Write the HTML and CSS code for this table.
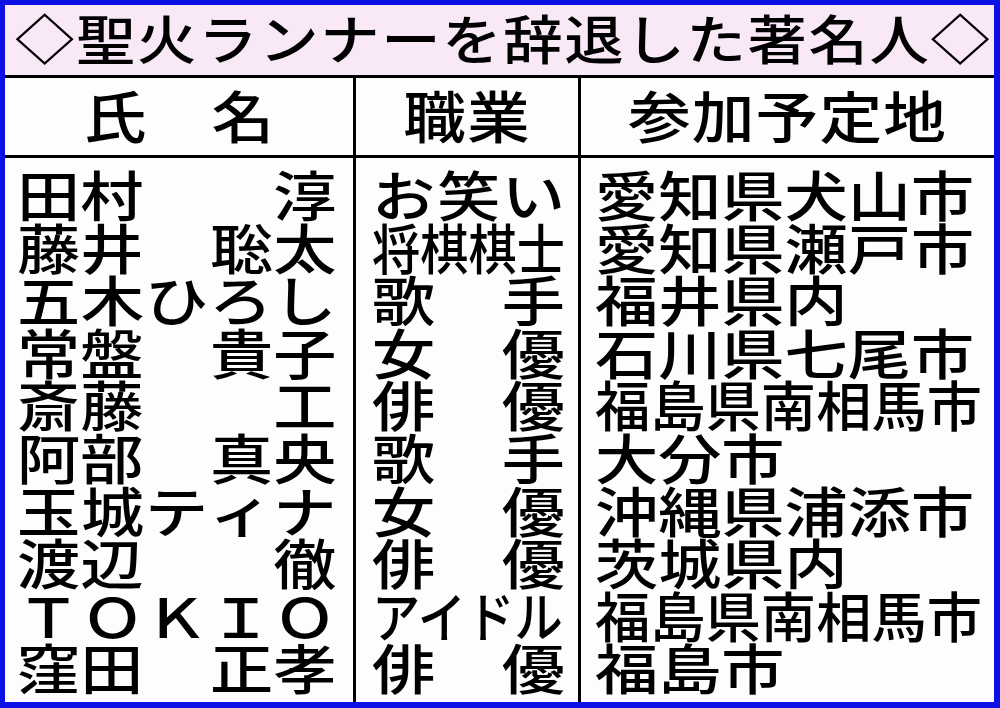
FILE: index.html
```html
<!DOCTYPE html>
<html lang="ja">
<head>
<meta charset="utf-8">
<title>聖火ランナーを辞退した著名人</title>
<link rel="stylesheet" href="styles.css">
</head>
<body>
<div class="board">
  <h1 class="title"><span class="title-text">◇聖火ランナーを辞退した著名人◇</span></h1>
  <div class="table">
    <div class="th c1"><span class="th-text">氏　名</span></div>
    <div class="th c2"><span class="th-text">職業</span></div>
    <div class="th c3"><span class="th-text">参加予定地</span></div>

    <div class="td c1">
      <div class="lines names">
        <div class="ln"><span>田村</span><span>淳</span></div>
        <div class="ln"><span>藤井</span><span>聡太</span></div>
        <div class="ln"><span>五</span><span>木</span><span>ひ</span><span>ろ</span><span>し</span></div>
        <div class="ln"><span>常盤</span><span>貴子</span></div>
        <div class="ln"><span>斎藤</span><span>工</span></div>
        <div class="ln"><span>阿部</span><span>真央</span></div>
        <div class="ln"><span>玉</span><span>城</span><span>テ</span><span>ィ</span><span>ナ</span></div>
        <div class="ln"><span>渡辺</span><span>徹</span></div>
        <div class="ln"><span>Ｔ</span><span>Ｏ</span><span>Ｋ</span><span>Ｉ</span><span>Ｏ</span></div>
        <div class="ln"><span>窪田</span><span>正孝</span></div>
      </div>
    </div>

    <div class="td c2">
      <div class="lines jobs">
        <div class="ln"><span>お</span><span>笑</span><span>い</span></div>
        <div class="ln-sq"><span class="sq">将棋棋士</span></div>
        <div class="ln"><span>歌</span><span>手</span></div>
        <div class="ln"><span>女</span><span>優</span></div>
        <div class="ln"><span>俳</span><span>優</span></div>
        <div class="ln"><span>歌</span><span>手</span></div>
        <div class="ln"><span>女</span><span>優</span></div>
        <div class="ln"><span>俳</span><span>優</span></div>
        <div class="ln-sq"><span class="sq">アイドル</span></div>
        <div class="ln"><span>俳</span><span>優</span></div>
      </div>
    </div>

    <div class="td c3">
      <div class="lines places">
        <div class="pl">愛知県犬山市</div>
        <div class="pl">愛知県瀬戸市</div>
        <div class="pl">福井県内</div>
        <div class="pl">石川県七尾市</div>
        <div class="pl"><span class="sq">福島県南相馬市</span></div>
        <div class="pl">大分市</div>
        <div class="pl">沖縄県浦添市</div>
        <div class="pl">茨城県内</div>
        <div class="pl"><span class="sq">福島県南相馬市</span></div>
        <div class="pl">福島市</div>
      </div>
    </div>
  </div>
</div>
</body>
</html>
```

FILE: styles.css
```css
html, body {
  margin: 0;
  padding: 0;
  background: #0b10e6;
}

.board {
  width: 1000px;
  height: 708px;
  box-sizing: border-box;
  border-style: solid;
  border-color: #0b10e6;
  border-width: 5px 6px 6px 5px;
  background: #fdfdfd;
  display: flex;
  flex-direction: column;
  font-family: "Noto Sans CJK JP", "Noto Sans CJK SC", sans-serif;
  font-weight: 500;
  color: #000;
  overflow: hidden;
}

.title {
  margin: 0;
  height: 73px;
  box-sizing: border-box;
  background: #f9e9f7;
  border-bottom: 3px solid #000;
  font-weight: 500;
  font-size: 53px;
  line-height: 64px;
  white-space: nowrap;
  padding-left: 10px;
}

.title-text {
  display: inline-block;
  letter-spacing: 1.5px;
  transform: scaleX(1.12);
  transform-origin: left top;
}

.table {
  flex: 1;
  display: grid;
  grid-template-columns: 351px 225px 1fr;
  grid-template-rows: 80px 1fr;
}

.th,
.td {
  box-sizing: border-box;
  min-width: 0;
}

.th {
  border-bottom: 3px solid #000;
  text-align: center;
  font-size: 56px;
  line-height: 71px;
  white-space: nowrap;
}

.th-text {
  display: inline-block;
  letter-spacing: 1px;
  transform: scaleX(1.12);
  transform-origin: center top;
}

.c1,
.c2 {
  border-right: 3px solid #000;
}

.td {
  padding-top: 10px;
  font-size: 54px;
  line-height: 52.6px;
  white-space: nowrap;
}

.lines {
  transform: scaleX(1.17);
  transform-origin: left top;
}

.names {
  width: 273px;
  margin-left: 12px;
}

.jobs {
  width: 165px;
  margin-left: 16px;
}

.places {
  width: 331px;
  margin-left: 14px;
}

.ln {
  display: flex;
  justify-content: space-between;
}

.ln-sq,
.pl {
  display: block;
}

.sq {
  display: inline-block;
  transform-origin: left top;
}

.jobs .sq {
  transform: scaleX(0.764);
}

.places .sq {
  transform: scaleX(0.875);
}
```
